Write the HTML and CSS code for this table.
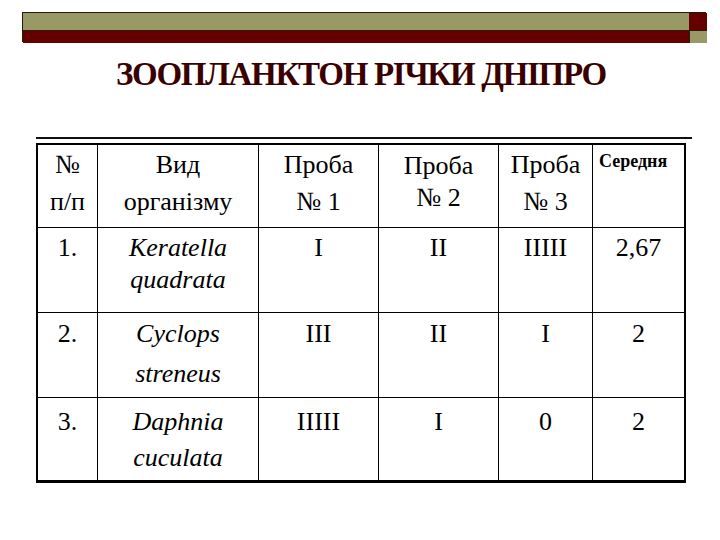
FILE: index.html
```html
<!DOCTYPE html>
<html lang="uk">
<head>
<meta charset="utf-8">
<title>Зоопланктон річки Дніпро</title>
<link rel="stylesheet" href="styles.css">
</head>
<body>
<div class="slide">
  <div class="topbar">
    <div class="tb-olive-wide"></div>
    <div class="tb-red-small"></div>
    <div class="tb-red-wide"></div>
    <div class="tb-olive-small"></div>
  </div>
  <div class="title-row"><span class="title">ЗООПЛАНКТОН РІЧКИ ДНІПРО</span></div>
  <div class="rule"></div>
  <div class="grid">
    <div class="cell head"><span class="tx">№</span><span class="tx">п/п</span></div>
    <div class="cell head"><span class="tx">Вид</span><span class="tx">організму</span></div>
    <div class="cell head"><span class="tx">Проба</span><span class="tx">№ 1</span></div>
    <div class="cell head tight"><span class="tx">Проба</span><span class="tx">№ 2</span></div>
    <div class="cell head"><span class="tx">Проба</span><span class="tx">№ 3</span></div>
    <div class="cell head avg last"><span class="tx">Середня</span></div>

    <div class="cell r1"><span class="tx">1.</span></div>
    <div class="cell r1"><span class="tx it">Keratella</span><span class="tx it">quadrata</span></div>
    <div class="cell r1"><span class="tx">I</span></div>
    <div class="cell r1"><span class="tx">II</span></div>
    <div class="cell r1"><span class="tx">IIIII</span></div>
    <div class="cell r1 last"><span class="tx">2,67</span></div>

    <div class="cell r2"><span class="tx">2.</span></div>
    <div class="cell r2"><span class="tx it">Cyclops</span><span class="tx it">streneus</span></div>
    <div class="cell r2"><span class="tx">III</span></div>
    <div class="cell r2"><span class="tx">II</span></div>
    <div class="cell r2"><span class="tx">I</span></div>
    <div class="cell r2 last"><span class="tx">2</span></div>

    <div class="cell r3"><span class="tx">3.</span></div>
    <div class="cell r3"><span class="tx it">Daphnia</span><span class="tx it">cuculata</span></div>
    <div class="cell r3"><span class="tx">IIIII</span></div>
    <div class="cell r3"><span class="tx">I</span></div>
    <div class="cell r3"><span class="tx">0</span></div>
    <div class="cell r3 last"><span class="tx">2</span></div>
  </div>
</div>
</body>
</html>
```
FILE: styles.css
```css
html, body {
  margin: 0;
  padding: 0;
  background: #ffffff;
}

.slide {
  width: 720px;
  color: #000;
  padding-top: 12px;
}

.topbar {
  margin-left: 22px;
  width: 684px;
  height: 30px;
  display: grid;
  grid-template-columns: 666px 18px;
  grid-template-rows: 18px 12px;
  box-sizing: border-box;
  border: 1px solid #1c1c10;
}

.tb-olive-wide {
  background: #999966;
  border-bottom: 1px solid #2a1a10;
}
.tb-red-small {
  background: #660000;
  border-bottom: 1px solid #2a1a10;
}
.tb-red-wide {
  background: #660000;
}
.tb-olive-small {
  background: #999966;
  border-left: 1px solid #1c1c10;
}

.title-row {
  margin-top: 14px;
  height: 36px;
  display: flex;
  justify-content: center;
  padding-left: 2px;
}

.title {
  font-family: "Liberation Serif", serif;
  font-size: 33px;
  line-height: 36px;
  font-weight: bold;
  letter-spacing: -1.3px;
  color: #3a0000;
}

.rule {
  margin: 45px 0 0 36px;
  width: 656px;
  height: 2px;
  background: #111;
}

.grid {
  margin: 4px 0 0 36px;
  width: 650px;
  box-sizing: border-box;
  border: 2px solid #000;
  border-right-width: 1px;
  border-bottom-width: 1px;
  display: grid;
  grid-template-columns: 60px 161px 120px 120px 94px 93px;
  grid-template-rows: 83px 85px 85px 84px;
}

.cell {
  box-sizing: border-box;
  border-right: 1px solid #000;
  border-bottom: 1px solid #000;
  display: flex;
  flex-direction: column;
  align-items: center;
}
.cell.last {
  border-right: 2px solid #000;
}
.cell.r3 {
  border-bottom: 2px solid #000;
}

.tx {
  display: block;
  font-family: "Liberation Serif", serif;
  font-size: 26px;
  white-space: nowrap;
}
.it { font-style: italic; }

.head { padding-top: 2px; }
.head .tx { line-height: 36.5px; }
.head.tight { padding-top: 5px; }
.head.tight .tx { line-height: 31.5px; }
.head.avg {
  align-items: flex-start;
  padding-left: 6px;
  padding-top: 6px;
}
.head.avg .tx {
  font-size: 18px;
  font-weight: bold;
  line-height: 20px;
}

.r1 { padding-top: 4px; }
.r1 .tx { line-height: 32px; }

.r2 { padding-top: 1px; }
.r2 .tx { line-height: 40px; }

.r3 { padding-top: 6px; }
.r3 .tx { line-height: 36px; }
```
